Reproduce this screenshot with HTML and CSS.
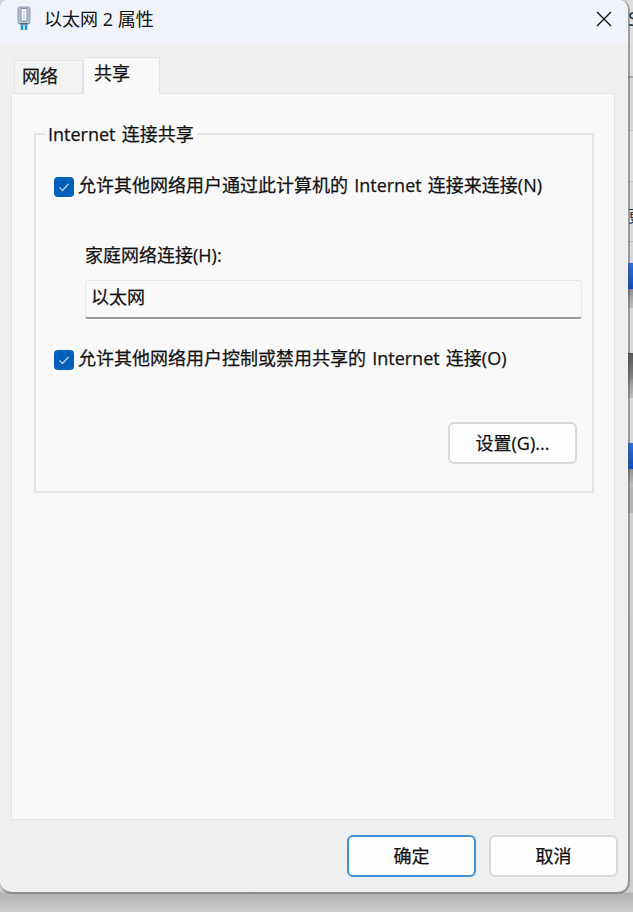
FILE: index.html
```html
<!DOCTYPE html>
<html lang="zh-CN">
<head>
  <meta charset="UTF-8">
  <title>以太网 2 属性</title>
  <link rel="stylesheet" href="styles.css">
</head>
<body>

  <div class="dialog">
    <div class="title-bar">
      <svg class="title-icon" width="14" height="26" viewBox="0 0 14 26">
        <rect x="1" y="1" width="12" height="17" rx="2" fill="#b4bfd2" stroke="#8e9bb3"/>
        <rect x="4" y="2.5" width="6" height="12.5" rx="1" fill="#f4f7fb" stroke="#8190a8"/>
        <rect x="6" y="5" width="2" height="8" fill="#d3dae5"/>
        <rect x="3" y="17" width="8" height="1.5" fill="#52667f"/>
        <path d="M5 18.5v5.5M9 18.5v5.5" stroke="#2599d2" stroke-width="2.6"/>
      </svg>
      <h1>以太网 2 属性</h1>
      <svg class="close" width="16" height="16" viewBox="0 0 16 16">
        <path d="M1 1l14 14M15 1L1 15" stroke="#111" stroke-width="1.4" fill="none"/>
      </svg>
    </div>

    <div class="tabs">
      <div class="tab">网络</div>
      <div class="tab active">共享</div>
    </div>

    <div class="panel">
      <fieldset class="group">
        <legend>Internet 连接共享</legend>

        <div class="check">
          <span class="box"><svg width="20" height="20" viewBox="0 0 20 20"><path d="M5.5 10.5l3 3 6-6.5" /></svg></span>
          <span>允许其他网络用户通过此计算机的 Internet 连接来连接(N)</span>
        </div>

        <div class="field">
          <div class="field-label">家庭网络连接(H):</div>
          <div class="field-input">以太网</div>
        </div>

        <div class="check">
          <span class="box"><svg width="20" height="20" viewBox="0 0 20 20"><path d="M5.5 10.5l3 3 6-6.5" /></svg></span>
          <span>允许其他网络用户控制或禁用共享的 Internet 连接(O)</span>
        </div>

        <button class="btn settings">设置(G)...</button>
      </fieldset>
    </div>

    <div class="footer">
      <button class="btn primary">确定</button>
      <button class="btn">取消</button>
    </div>
  </div>

  <!-- window behind the dialog -->
  <div class="behind">
    <div class="behind-title"><span>S</span></div>
    <div class="behind-bar"></div>
    <div class="behind-row"></div>
    <div class="behind-tools"><span>更</span></div>
    <div class="behind-gap"></div>
    <div class="behind-icon blue"></div>
    <div class="behind-shade"></div>
    <div class="behind-gap wide"></div>
    <div class="behind-icon gray"></div>
    <div class="behind-shade"></div>
    <div class="behind-gap wide"></div>
    <div class="behind-icon blue"></div>
    <div class="behind-shade"></div>
    <div class="behind-end"></div>
  </div>

</body>
</html>
```

FILE: styles.css
```css
* { margin: 0; padding: 0; box-sizing: border-box; }
body {
  display: flex;
  align-items: flex-start;
  width: 633px;
  height: 912px;
  overflow: hidden;
  background: linear-gradient(#d2d2d2 0, #cfcfcf 892px, #b2b2b2 893px, #cecece 912px);
  font-family: "Open Sans", "Noto Sans CJK SC", sans-serif;
  font-size: 18px;
  line-height: 24px;
  color: #111;
}
.dialog {
  position: relative;
  z-index: 1;
  flex: none;
  width: 630px;
  height: 894px;
  border: solid rgba(80, 80, 80, 0.45);
  border-width: 0 2px 2px 0;
  border-radius: 8px 10px 12px 12px;
  background-color: #efefef;
  background-clip: padding-box;
  overflow: hidden;
}
.title-bar {
  display: flex;
  align-items: center;
  height: 43px;
  padding: 0 16px 5px 17px;
  background-color: #f0f3f9;
}
.title-bar h1 {
  flex: 1;
  margin-left: 13px;
  font-size: 18px;
  font-weight: normal;
}
.tabs,
.panel,
.footer {
  -webkit-text-stroke: 0.25px #111;
}
.tabs {
  display: flex;
  align-items: flex-end;
  height: 50px;
  padding-left: 14px;
}
.tab {
  width: 69px;
  height: 33px;
  padding: 3px 0 0 7px;
  border: 1px solid #e4e4e4;
  border-bottom: none;
  background-color: #f3f3f3;
}
.tab.active {
  position: relative;
  z-index: 1;
  width: 77px;
  height: 37px;
  padding: 3px 0 0 10px;
  margin-bottom: -1px;
  background-color: #f9f9f9;
}
.panel {
  width: 604px;
  height: 727px;
  margin-left: 11px;
  padding: 28px 20px 0 22px;
  border: 1px solid #e4e4e4;
  background-color: #f9f9f9;
  word-spacing: 1.5px;
}
.group {
  height: 371px;
  border: 2px solid #e5e5e5;
}
.group legend {
  height: 24px;
  margin-left: 9px;
  padding: 0 3px;
}
.check {
  display: flex;
  height: 24px;
  margin: 27px 0 0 18px;
  white-space: nowrap;
}
.box {
  width: 20px;
  height: 20px;
  margin: 4px 4px 0 0;
  border-radius: 4px;
  background-color: #005fb8;
}
.box svg {
  display: block;
}
.box path {
  fill: none;
  stroke: #b9d5ee;
  stroke-width: 1.3;
}
.field {
  margin: 46px 10px 0 49px;
}
.field-input {
  height: 39px;
  margin-top: 13px;
  padding: 4px 5px;
  border: 1px solid #e8e8e8;
  border-bottom: 2px solid #9a9a9a;
  border-radius: 3px;
}
.btn {
  width: 129px;
  height: 42px;
  border: 2px solid #d9d9d9;
  border-radius: 6px;
  background-color: #fdfdfd;
  font: inherit;
  color: inherit;
}
.btn.primary {
  border-color: #3a91d8;
}
.settings {
  display: block;
  margin: 52px 15px 0 auto;
}
.footer {
  display: flex;
  justify-content: flex-end;
  gap: 13px;
  padding: 15px 10px 0 0;
}

/* only the right edge of this one is visible */
.behind {
  flex: none;
  width: 7px;
  height: 912px;
  margin-left: -4px;
  padding-left: 2px;
  overflow: hidden;
}
.behind-title {
  height: 76px;
  padding-top: 7px;
  background: #dedede;
  font-size: 20px;
  color: #22334c;
}
.behind-bar {
  height: 54px;
  border-top: 2px solid #aaa;
  background: #d6d6d6;
}
.behind-row {
  height: 52px;
  border: solid #c2c2c2;
  border-width: 1px 0;
  background: #dfdfdf;
}
.behind-tools {
  height: 59px;
  padding-top: 22px;
  background: #dadada;
  font-size: 16px;
  color: #22334c;
}
.behind-gap {
  height: 22px;
  border-top: 1px solid #bbb;
  background: #d8d8d8;
}
.behind-gap.wide {
  height: 46px;
}
.behind-icon {
  height: 26px;
}
.behind-icon.blue {
  background: linear-gradient(#2d70dd, #0b4bc4);
}
.behind-icon.gray {
  background: linear-gradient(#555, #858585);
}
.behind-shade {
  height: 18px;
  background: linear-gradient(#909090, #c0c0c0);
}
.behind-end {
  height: 26px;
  background: #b4b4b4;
}
```
